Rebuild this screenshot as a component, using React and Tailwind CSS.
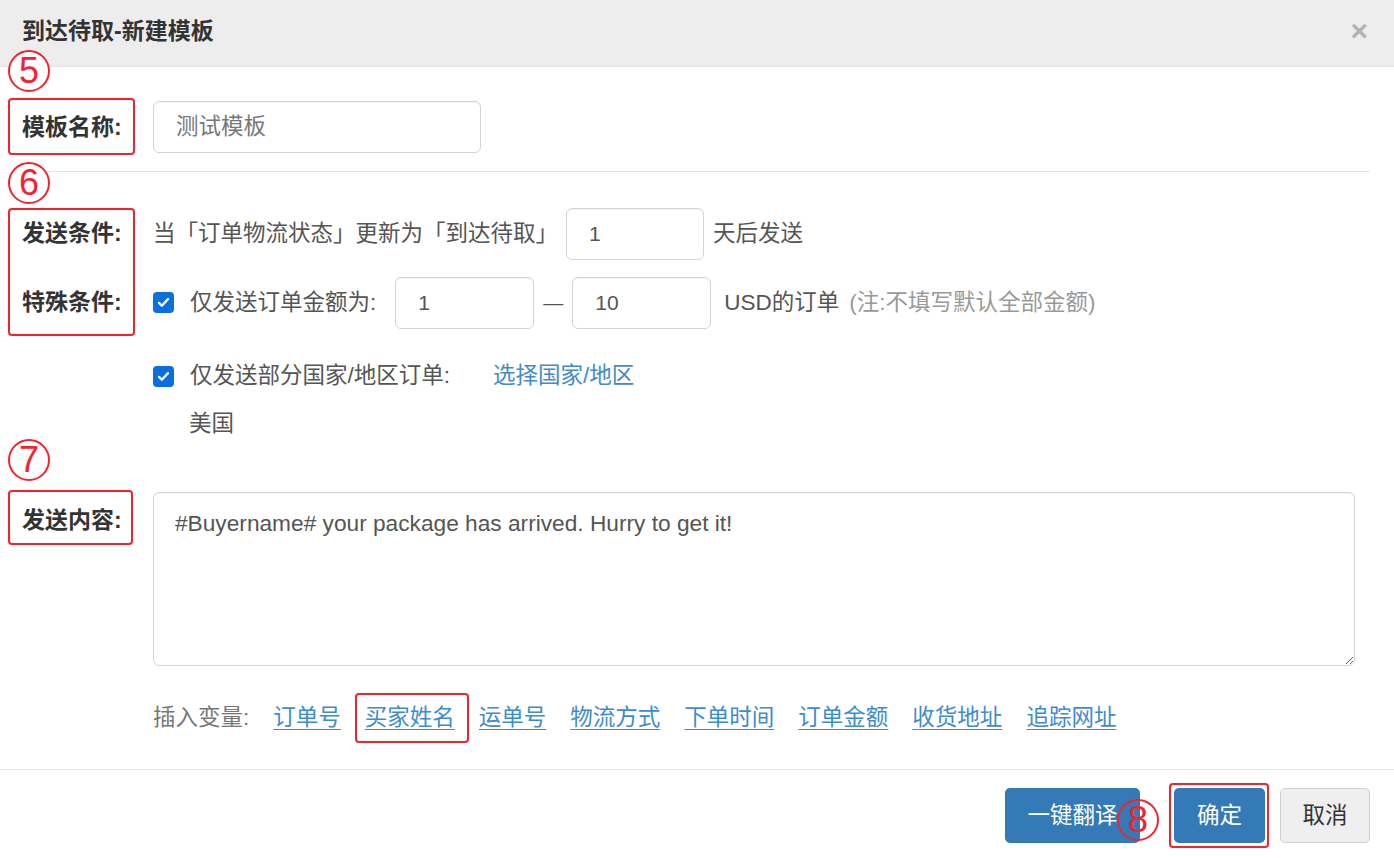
import React from 'react';

const Check = () => (
  <span className="w-[21px] h-[21px] rounded-[4px] bg-[#0b6fde] flex items-center justify-center shrink-0">
    <svg viewBox="0 0 16 16" className="w-[15px] h-[15px]">
      <path d="M3.2 8.4l3 3 6.6-7" stroke="white" strokeWidth="2.4" fill="none" strokeLinecap="round" strokeLinejoin="round" />
    </svg>
  </span>
);

const Mark = ({ n, className }) => (
  <div className={`absolute w-[42px] h-[42px] rounded-full border-2 border-[#f5222d] flex items-center justify-center text-[#f5222d] text-[36px] leading-none ${className}`}>
    {n}
  </div>
);

const Box = ({ className }) => (
  <div className={`absolute border-2 border-[#f5222d] rounded-[4px] ${className}`}></div>
);

const Input = ({ value, className, cjk }) => (
  <div className={`h-[52px] border border-[#d4d4d4] rounded-[6px] bg-white flex items-center pl-[22px] shadow-[inset_0_1px_1px_rgba(0,0,0,0.05)] ${cjk ? 'text-[22.5px] text-[#777]' : 'text-[21px] text-[#555]'} ${className}`}>
    {value}
  </div>
);

const vars = ['订单号', '买家姓名', '运单号', '物流方式', '下单时间', '订单金额', '收货地址', '追踪网址'];

export default function App() {
  return (
    <div className="relative w-[1394px] h-[858px] bg-white font-['Liberation_Sans','Noto_Sans_CJK_SC',sans-serif] text-[#555] overflow-hidden">
      {/* header */}
      <div className="h-[67px] bg-[#ededed] border-b border-[#e2e2e2] flex items-center justify-between pl-[22px] pr-[26px] pb-[4px]">
        <h1 className="text-[23px] font-bold text-[#333]">到达待取-新建模板</h1>
        <span className="text-[30px] font-bold text-[#b3b3b3] leading-none">×</span>
      </div>

      {/* body */}
      <div className="pl-[22px] pr-[24px]">
        <div className="flex items-center mt-[34px] h-[52px]">
          <div className="w-[131px] text-[23px] font-bold text-[#333]">模板名称:</div>
          <Input value="测试模板" cjk className="w-[328px]" />
        </div>

        <div className="mt-[18px] ml-[26px] h-px bg-[#e5e5e5]"></div>

        <div className="flex items-center mt-[36px] h-[51px] text-[22.5px]">
          <div className="w-[131px] font-bold text-[#333] text-[23px]">发送条件:</div>
          <span>当「订单物流状态」更新为「到达待取」</span>
          <Input value="1" className="w-[138px] ml-[8px] h-[51px]" />
          <span className="ml-[9px]">天后发送</span>
        </div>

        <div className="flex items-center mt-[18px] h-[51px] text-[22.5px]">
          <div className="w-[131px] font-bold text-[#333] text-[23px]">特殊条件:</div>
          <Check />
          <span className="ml-[16px]">仅发送订单金额为:</span>
          <Input value="1" className="w-[139px] ml-[19px] h-[51px]" />
          <span className="w-[38px] text-center text-[20px]">—</span>
          <Input value="10" className="w-[139px] h-[51px]" />
          <span className="ml-[13px]">USD的订单</span>
          <span className="ml-[10px] text-[#999]">(注:不填写默认全部金额)</span>
        </div>

        <div className="flex items-center mt-[33px] h-[30px] pl-[131px] text-[22.5px]">
          <Check />
          <span className="ml-[16px]">仅发送部分国家/地区订单:</span>
          <span className="ml-[43px] text-[#428bca]">选择国家/地区</span>
        </div>

        <div className="flex items-center mt-[18px] h-[30px] pl-[167px] text-[22.5px]">美国</div>

        <div className="flex items-start mt-[53px]">
          <div className="w-[131px] h-[56px] flex items-center text-[23px] font-bold text-[#333]">发送内容:</div>
          <textarea
            defaultValue="#Buyername# your package has arrived. Hurry to get it!"
            className="w-[1202px] h-[174px] border border-[#d4d4d4] rounded-[6px] px-[21px] pt-[13px] text-[22.7px] text-[#555] outline-none shadow-[inset_0_1px_1px_rgba(0,0,0,0.05)] font-['Liberation_Sans',sans-serif]"
          />
        </div>

        <div className="flex items-center mt-[37px] h-[30px] pl-[131px] text-[22.5px]">
          <span className="text-[#777] mr-[24px]">插入变量:</span>
          <div className="flex gap-[24px]">
            {vars.map(v => (
              <span key={v} className="text-[#3d8bd0] underline underline-offset-[4px] decoration-1">{v}</span>
            ))}
          </div>
        </div>
      </div>

      {/* footer */}
      <div className="mt-[36px] border-t border-[#e5e5e5] pt-[18px] pr-[24px] flex justify-end items-center text-[22.5px]">
        <button className="w-[135px] h-[55px] rounded-[5px] bg-[#337ab7] text-white">一键翻译</button>
        <button className="w-[91px] h-[55px] rounded-[5px] bg-[#337ab7] text-white ml-[34px]">确定</button>
        <button className="w-[90px] h-[55px] rounded-[5px] bg-[#efefef] border border-[#cfcfcf] text-[#333] ml-[15px]">取消</button>
      </div>

      {/* annotations */}
      <Mark n="5" className="left-[8px] top-[50px] bg-white" />
      <Mark n="6" className="left-[8px] top-[162px] bg-white" />
      <Mark n="7" className="left-[8px] top-[439px] bg-white" />
      <Mark n="8" className="left-[1117px] top-[799px]" />
      <Box className="left-[8px] top-[98px] w-[127px] h-[57px]" />
      <Box className="left-[8px] top-[208px] w-[127px] h-[128px]" />
      <Box className="left-[8px] top-[490px] w-[125px] h-[55px]" />
      <Box className="left-[355px] top-[693px] w-[114px] h-[50px]" />
      <Box className="left-[1169px] top-[783px] w-[100px] h-[65px]" />
    </div>
  );
}
